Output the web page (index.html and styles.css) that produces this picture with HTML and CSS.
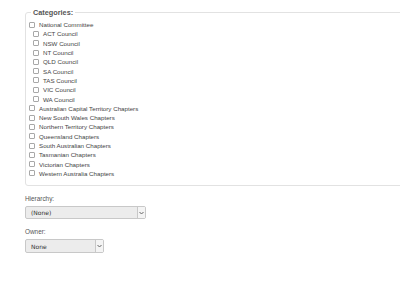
FILE: index.html
```html
<!DOCTYPE html>
<html lang="en">
<head>
    <meta charset="UTF-8">
    <title>Categories</title>
    <link rel="stylesheet" href="styles.css">
</head>
<body>
    <form class="filter-form">
        <fieldset class="categories">
            <legend>Categories:</legend>
            <ul class="cat-list">
                <li><label><input type="checkbox"> National Committee</label>
                    <ul class="cat-list sub">
                        <li><label><input type="checkbox"> ACT Council</label></li>
                        <li><label><input type="checkbox"> NSW Council</label></li>
                        <li><label><input type="checkbox"> NT Council</label></li>
                        <li><label><input type="checkbox"> QLD Council</label></li>
                        <li><label><input type="checkbox"> SA Council</label></li>
                        <li><label><input type="checkbox"> TAS Council</label></li>
                        <li><label><input type="checkbox"> VIC Council</label></li>
                        <li><label><input type="checkbox"> WA Council</label></li>
                    </ul>
                </li>
                <li><label><input type="checkbox"> Australian Capital Territory Chapters</label></li>
                <li><label><input type="checkbox"> New South Wales Chapters</label></li>
                <li><label><input type="checkbox"> Northern Territory Chapters</label></li>
                <li><label><input type="checkbox"> Queensland Chapters</label></li>
                <li><label><input type="checkbox"> South Australian Chapters</label></li>
                <li><label><input type="checkbox"> Tasmanian Chapters</label></li>
                <li><label><input type="checkbox"> Victorian Chapters</label></li>
                <li><label><input type="checkbox"> Western Australia Chapters</label></li>
            </ul>
        </fieldset>

        <div class="field">
            <label class="field-label">Hierarchy:</label>
            <div class="select hierarchy">
                <span class="select-value">(None)</span>
                <span class="select-arrow">
                    <svg width="5" height="4" viewBox="0 0 5 4"><path d="M0.5 1 L2.5 3 L4.5 1" fill="none" stroke="#666" stroke-width="1"/></svg>
                </span>
            </div>
        </div>

        <div class="field">
            <label class="field-label">Owner:</label>
            <div class="select owner">
                <span class="select-value">None</span>
                <span class="select-arrow">
                    <svg width="5" height="4" viewBox="0 0 5 4"><path d="M0.5 1 L2.5 3 L4.5 1" fill="none" stroke="#666" stroke-width="1"/></svg>
                </span>
            </div>
        </div>
    </form>
</body>
</html>
```

FILE: styles.css
```css
* {
    margin: 0;
    padding: 0;
    box-sizing: border-box;
}

html, body {
    overflow: hidden;
}

body {
    font-family: 'Liberation Sans', Arial, sans-serif;
    background: #fff;
    color: #444;
    width: 400px;
    height: 292px;
}

.filter-form {
    padding: 7px 0 0 25px;
    width: 420px;
}

/* 分类框 */
.categories {
    border: 1px solid #e2e2e2;
    border-radius: 3px;
    padding: 2px 0 7px 3px;
}

.categories legend {
    font-size: 7.3px;
    font-weight: bold;
    color: #555;
    line-height: 11px;
    padding: 0 2px;
    margin-left: 2px;
}

.cat-list {
    list-style: none;
}

.cat-list.sub {
    padding-left: 4px;
}

.cat-list label {
    display: flex;
    align-items: center;
    height: 9.31px;
    font-size: 6.2px;
    color: #444;
}

.cat-list input {
    appearance: none;
    width: 6px;
    height: 6px;
    border: 1px solid #a8a8a8;
    border-radius: 1px;
    background: #fff;
    margin: 0 4px 0 0;
    flex-shrink: 0;
}

/* 下拉框 */
.field {
    margin-top: 9px;
}

.field-label {
    display: block;
    font-size: 6.4px;
    color: #555;
    line-height: 8px;
    margin-bottom: 3px;
}

.select {
    display: flex;
    align-items: stretch;
    height: 13px;
    background: #ececec;
    border: 1px solid #c8c8c8;
    border-radius: 2px;
}

.hierarchy {
    width: 121px;
}

.owner {
    width: 79px;
    height: 14px;
}

.select-value {
    flex: 1;
    display: flex;
    align-items: center;
    padding-left: 5px;
    font-family: 'DejaVu Sans', sans-serif;
    font-size: 6px;
    color: #333;
}

.select-arrow {
    width: 8px;
    display: flex;
    align-items: center;
    justify-content: center;
    border-left: 1px solid #c8c8c8;
    background: #f4f4f4;
}
```
